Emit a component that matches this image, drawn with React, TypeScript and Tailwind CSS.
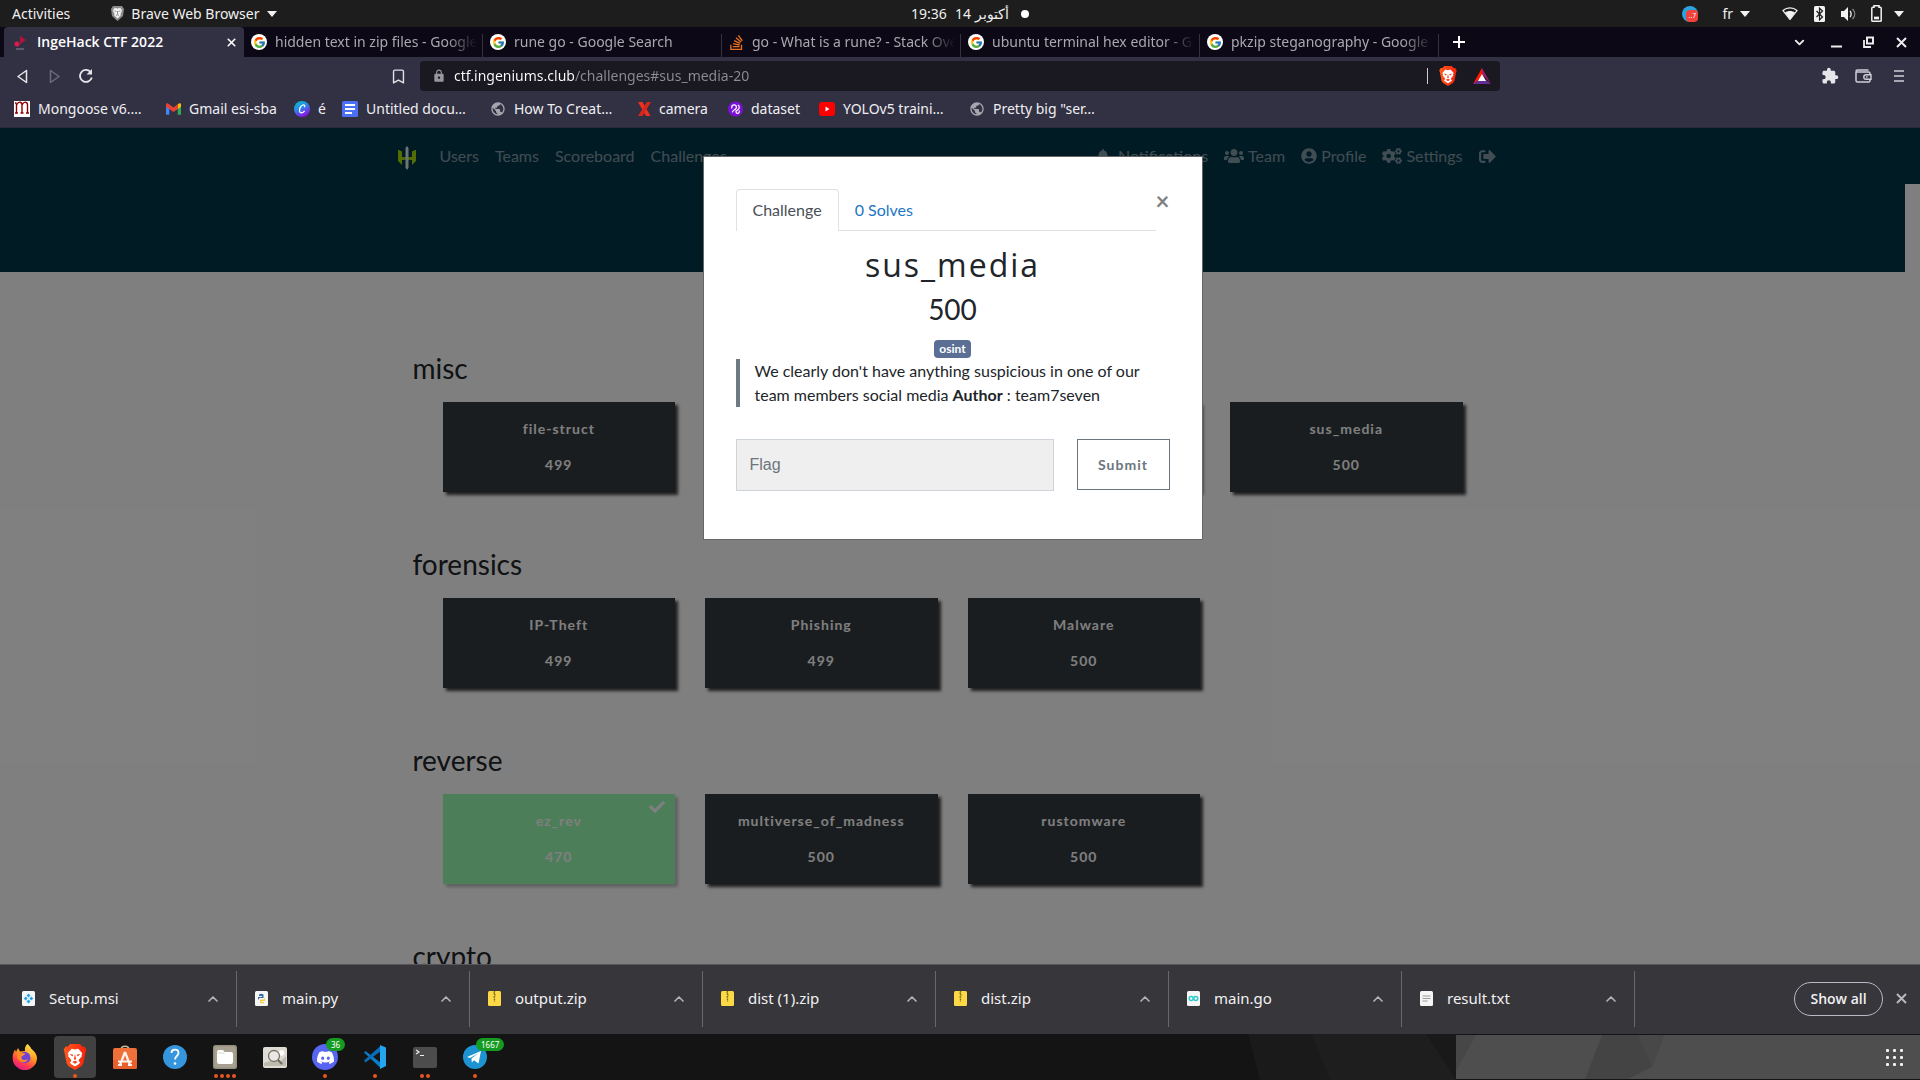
import type { ReactNode } from "react";
import { FaBell, FaCheck, FaCogs, FaSignOutAlt, FaUserCircle, FaUsers } from "react-icons/fa";
import { FcGoogle } from "react-icons/fc";
import { SiDiscord, SiStackoverflow } from "react-icons/si";
import { Bookmark, ChevronDown, ChevronUp, X } from "lucide-react";
import { MdExtension, MdLock, MdPublic } from "react-icons/md";

/* ---------- small drawings ---------- */

function Caret({ className = "" }: { className?: string }) {
  return (
    <svg width="10" height="6" viewBox="0 0 10 6" className={className} aria-hidden="true">
      <path d="M0 0h10L5 6z" fill="#f2f2f2" />
    </svg>
  );
}

function BraveMono() {
  return (
    <svg width="15" height="17" viewBox="0 0 15 17" aria-hidden="true">
      <path d="M3 1h9l2 3-1 7-5.500 5L2 11 1 4z" fill="#8c8c8c" />
      <path d="M4 3.500 6 3l1.500.7L9 3l2 .5 1 2.200-1.500 3 .3 1.600-3.300 3.200-3.300-3.200.3-1.600L3 5.700z" fill="#f4f4f4" />
      <path d="M4.500 5.800 6.500 6.500M10.500 5.800l-2 .7M7.500 6v3.500M6 10.500l1.500-.8 1.500.8" stroke="#777" strokeWidth=".8" fill="none" />
    </svg>
  );
}

function BraveLion({ size }: { size: number }) {
  return (
    <svg width={size} height={size} viewBox="0 0 24 24" aria-hidden="true">
      <defs>
        <linearGradient id="lion" x1="0" x2="1">
          <stop offset="0" stopColor="#ff5a1c" />
          <stop offset="1" stopColor="#f5200c" />
        </linearGradient>
      </defs>
      <path d="M7.500 0h9l2.300 2.500 2-.2 1.700 3-.8 2.500-2 10.200-1.800 2.500L12 24l-5.900-3.500L4.300 18l-2-10.200-.8-2.500 1.700-3 2 .2z" fill="url(#lion)" />
      <path
        d="M9 4.300 12 5l3-.7 3.800 4.200-.8 1.600.4 1.300-2.900 3.200.2 1.600 1.200.8-1.500 1.600L12 20.800l-3.400-2.200L7.100 17l1.200-.8.2-1.600-2.900-3.200.4-1.300-.8-1.600z"
        fill="#fff"
      />
      <path d="m7 9 3.400.9-.9 1.700zM17 9l-3.400.9.9 1.700zM12 9.500l1 4.300-1 .9-1-.9zM9.500 16.500 12 15.400l2.500 1.100L12 18.300z" fill="#fb3b14" />
    </svg>
  );
}

function BatTriangle() {
  return (
    <svg width="18" height="16" viewBox="0 0 18 16" aria-hidden="true">
      <path d="M9 0 0 16l9-6z" fill="#ff1a00" />
      <path d="M9 0v6l9 10z" fill="#9e1f63" />
      <path d="M0 16h18l-5-4H5z" fill="#662d91" />
      <path d="M9 0 5 12h2l2-4z" fill="#ff1a00" />
      <path d="m9 6 4 7H5z" fill="#fff" />
    </svg>
  );
}

function GoogleMark() {
  return (
    <span className="flex size-4 shrink-0 items-center justify-center rounded-full bg-white">
      <FcGoogle size={13} />
    </span>
  );
}

function CtfFavicon() {
  return (
    <svg width="16" height="16" viewBox="0 0 16 16" aria-hidden="true">
      <path d="m7 2 6 4-6 4z" fill="#b3123c" />
      <circle cx="4" cy="10" r="2.500" fill="#e0194c" />
      <path d="M3 15h8" stroke="#8a8792" strokeWidth="1" />
    </svg>
  );
}

function CtfLogo() {
  return (
    <svg width="18" height="24" viewBox="0 0 18 24" aria-hidden="true">
      <path d="M0 4h1l3 1.500V11h10V5.500L17 4h1v11l-4 4v-5H4v5l-4-4z" fill="#a8d808" />
      <path d="M6.500 3.500h5v17h-5z" fill="#03364a" />
      <path d="M6.500 11h5v3h-5z" fill="#a8d808" />
      <path d="M7.500 2 9 0l1.500 2v19.500L9 24l-1.500-2.500z" fill="#dfe8ea" />
    </svg>
  );
}

function Gmail() {
  return (
    <svg width="15" height="12" viewBox="0 0 16 12" aria-hidden="true">
      <path d="M0 1.500V12h3.500V4.500z" fill="#4285f4" />
      <path d="M16 1.500V12h-3.500V4.500z" fill="#34a853" />
      <path d="M12.500 1v5L16 3.500V1.500C16 0 14.500-.4 13.500.3z" fill="#fbbc04" />
      <path d="M0 1.500v2L8 9.300l4.500-3.300V1L8 4.300 2.500.3C1.500-.4 0 0 0 1.500z" fill="#ea4335" />
    </svg>
  );
}

function ApertureX() {
  return (
    <svg width="13" height="14" viewBox="0 0 13 14" aria-hidden="true">
      <path d="M0 0h4.500l8 14H8z" fill="#f0301f" />
      <path d="M9 0h4L4.500 14H0z" fill="#d8261c" />
    </svg>
  );
}

function YouTube() {
  return (
    <svg width="16" height="14" viewBox="0 0 16 14" aria-hidden="true">
      <rect width="16" height="14" rx="3" fill="#f00" />
      <path d="m6.500 4.500 4 2.500-4 2.500z" fill="#fff" />
    </svg>
  );
}

function DocsMark() {
  return (
    <svg width="16" height="16" viewBox="0 0 16 16" aria-hidden="true">
      <rect width="16" height="16" rx="1.500" fill="#4a70f5" />
      <path d="M3 4h10M3 8h10M3 12h7" stroke="#fff" strokeWidth="1.800" />
    </svg>
  );
}

function MongooseMark() {
  return (
    <svg width="16" height="16" viewBox="0 0 16 16" aria-hidden="true">
      <path d="M0 0h16v16H0z" fill="#fff" />
      <path d="M2.500 12V2.500M2.500 4C5-.5 8 1 8 4v8M8 4c2.500-4.500 5.500-3 5.500 0v8M1 12h3M6.500 12h3M12 12h3M1 2h1.500" stroke="#800" strokeWidth="1.400" fill="none" />
    </svg>
  );
}

function CanvaMark() {
  return (
    <svg width="16" height="16" viewBox="0 0 16 16" aria-hidden="true">
      <defs>
        <linearGradient id="canva" x1="0" y1="0" x2=".5" y2="1">
          <stop offset="0" stopColor="#00c4cc" />
          <stop offset=".5" stopColor="#2a8be6" />
          <stop offset="1" stopColor="#8a14ee" />
        </linearGradient>
      </defs>
      <circle cx="8" cy="8" r="8" fill="url(#canva)" />
      <path d="M10.300 6.200c1-1.200.2-2.700-1.300-2.200C6.500 4.800 5 8 5.600 10.300c.6 2.200 3.300 2 5-.4" stroke="#fff" strokeWidth="1.300" fill="none" />
    </svg>
  );
}

function RoboflowMark() {
  return (
    <svg width="15" height="16" viewBox="0 0 16 16" aria-hidden="true">
      <circle cx="8" cy="8" r="8" fill="#7b10d8" />
      <path d="M4 7.500V6a2.500 2.500 0 0 1 5 0q0 1.200-1 2l-2.500 2q-1 .8-.5 1.500" stroke="#fff" strokeWidth="1.300" fill="none" />
      <path d="M10.500 3.800q1.500.7 1.500 2.400 0 1.500-1.200 2.400L8.500 10.300v.7a1.700 1.700 0 0 0 3.500 0V9.500" stroke="#fff" strokeWidth="1.300" fill="none" />
    </svg>
  );
}

function Globe() {
  return <MdPublic size={16} className="text-[#a5a5ad]" />;
}

/* ---------- desktop top bar ---------- */

function TopBar() {
  return (
    <header className="grid h-[27px] shrink-0 grid-cols-3 items-center bg-[#1d1d1d] text-sm text-[#f0f0f0]">
      <div className="flex items-center pl-3">
        <button>Activities</button>
        <button className="ml-10 flex items-center">
          <BraveMono />
          <span className="ml-[6px]">Brave Web Browser</span>
          <Caret className="ml-[7px]" />
        </button>
      </div>
      <div className="flex items-center justify-center gap-3 pl-[20px]">
        <button className="flex gap-2 whitespace-nowrap">
          <span>19:36</span>
          <span className="flex gap-1">
            <span>14</span>
            <span lang="ar">أكتوبر</span>
          </span>
        </button>
        <span className="size-2 rounded-full bg-white" />
      </div>
      <div className="flex items-center justify-end pr-4">
        <span className="relative size-4 rounded-full bg-[#2ba3e0]">
          <span className="absolute top-1 left-1 flex h-3 w-3 items-center justify-center rounded-[4px] bg-[#f4403a] text-[7px] text-white">
            ..7
          </span>
        </span>
        <button className="ml-6 flex items-center gap-[7px]">
          fr <Caret />
        </button>
        <svg width="16" height="13" viewBox="0 0 16 13" className="ml-8" aria-hidden="true">
          <path d="M1 3.500C5 0 11 0 15 3.500L8 12.500z" fill="none" stroke="#f2f2f2" strokeWidth="1.200" />
          <path d="M3 5.500c3-2 7-2 10 0l-5 7z" fill="#f2f2f2" />
        </svg>
        <svg width="11" height="16" viewBox="0 0 11 16" className="ml-4" aria-hidden="true">
          <rect width="11" height="16" rx="1.500" fill="#f2f2f2" />
          <path d="m2.500 5 6 6-3 2.800V2.200L8.500 5l-6 6" fill="none" stroke="#1d1d1d" strokeWidth="1.200" />
        </svg>
        <svg width="16" height="14" viewBox="0 0 16 14" className="ml-4" aria-hidden="true">
          <path d="M0 4h3l4-4v14l-4-4H0z" fill="#f2f2f2" />
          <path d="M9 4c1.500 1.500 1.500 4.500 0 6" stroke="#f2f2f2" strokeWidth="1.300" fill="none" />
          <path d="M11.500 2c3 3 3 7 0 10" stroke="#888" strokeWidth="1.300" fill="none" />
        </svg>
        <svg width="11" height="17" viewBox="0 0 11 19" preserveAspectRatio="none" className="ml-[14px]" aria-hidden="true">
          <path d="M3 2.500V.8h5v1.700h1.200q1 0 1 1v13.700q0 1-1 1H1.800q-1 0-1-1V3.500q0-1 1-1z" fill="none" stroke="#f2f2f2" strokeWidth="1.500" />
          <path d="M3 13h5v3H3z" fill="#f2f2f2" />
        </svg>
        <Caret className="ml-3" />
      </div>
    </header>
  );
}

/* ---------- browser chrome ---------- */

const tabs: { title: string; icon: ReactNode }[] = [
  { title: "hidden text in zip files - Google Search", icon: <GoogleMark /> },
  { title: "rune go - Google Search", icon: <GoogleMark /> },
  { title: "go - What is a rune? - Stack Overflow", icon: <SiStackoverflow size={15} className="shrink-0 text-[#e8701f]" /> },
  { title: "ubuntu terminal hex editor - Google Search", icon: <GoogleMark /> },
  { title: "pkzip steganography - Google Search", icon: <GoogleMark /> },
];

function TabStrip() {
  return (
    <div className="flex h-[30px] shrink-0 bg-[#0c0816] pl-1 text-sm text-[#a9a8ae]">
      <div className="flex w-[240px] shrink-0 items-center rounded-t bg-[#323144] pr-[6px] pl-[9px] text-white">
        <CtfFavicon />
        <button className="ml-2 flex-1 truncate text-left font-['Open_Sans',sans-serif] font-semibold">IngeHack CTF 2022</button>
        <button aria-label="Close tab">
          <X size={13} strokeWidth={3} />
        </button>
      </div>
      {tabs.map((tab) => (
        <div key={tab.title} className="flex w-[239px] shrink-0 items-end">
          <button className="flex h-[30px] min-w-0 flex-1 items-center gap-2 pr-[5px] pl-[7px]">
            {tab.icon}
            <span className="min-w-0 flex-1 overflow-hidden mask-r-from-85% mask-r-to-100% text-left whitespace-nowrap">{tab.title}</span>
          </button>
          <span className="h-[23px] w-px bg-[#35323d]" />
        </div>
      ))}
      <button aria-label="New tab" className="ml-[14px] flex items-center">
        <svg width="12" height="12" viewBox="0 0 12 12" aria-hidden="true">
          <path d="M6 0v12M0 6h12" stroke="#fff" strokeWidth="2" />
        </svg>
      </button>
      <div className="ml-auto flex items-center pr-[13px] text-[#ececec]">
        <button aria-label="Search tabs">
          <ChevronDown size={15} strokeWidth={3} />
        </button>
        <button aria-label="Minimize" className="ml-6">
          <svg width="11" height="12" viewBox="0 0 11 12" aria-hidden="true">
            <path d="M0 10.500h11" stroke="#ececec" strokeWidth="2" />
          </svg>
        </button>
        <button aria-label="Restore" className="ml-[21px]">
          <svg width="11" height="12" viewBox="0 0 11 12" aria-hidden="true">
            <path d="M4 1.500h6v6H4z" fill="none" stroke="#ececec" strokeWidth="2" />
            <path d="M1 4v7h7" fill="none" stroke="#ececec" strokeWidth="1.800" />
          </svg>
        </button>
        <button aria-label="Close window" className="ml-[22px]">
          <svg width="11" height="11" viewBox="0 0 11 11" aria-hidden="true">
            <path d="m1 1 9 9M10 1l-9 9" stroke="#ececec" strokeWidth="2" />
          </svg>
        </button>
      </div>
    </div>
  );
}

function Toolbar() {
  return (
    <div className="flex h-[38px] shrink-0 items-center bg-[#323144] pr-4 pl-[17px]">
      <button aria-label="Back">
        <svg width="11" height="15" viewBox="0 0 11 15" aria-hidden="true">
          <path d="M9.500 1.500v12L1 7.500z" fill="none" stroke="#e6e6ea" strokeWidth="1.500" strokeLinejoin="round" />
        </svg>
      </button>
      <button aria-label="Forward" className="ml-[21px]">
        <svg width="11" height="15" viewBox="0 0 11 15" aria-hidden="true">
          <path d="M1.500 1.500v12l8.500-6z" fill="none" stroke="#6c6b7a" strokeWidth="1.500" strokeLinejoin="round" />
        </svg>
      </button>
      <button aria-label="Reload" className="ml-[18px]">
        <svg width="16" height="16" viewBox="0 0 16 16" aria-hidden="true">
          <path d="M13.800 9.500a6 6 0 1 1-1.500-5.800" fill="none" stroke="#e6e6ea" strokeWidth="1.800" />
          <path d="M14 1v5.500H8.500z" fill="#e6e6ea" />
        </svg>
      </button>
      <button aria-label="Bookmark this page" className="ml-[296px] text-[#e0e0e6]">
        <Bookmark size={17} />
      </button>
      <div className="ml-[13px] flex h-[30px] w-full max-w-[1080px] items-center rounded bg-[#1a1922] pr-[9px] pl-3 text-sm">
        <MdLock size={14} className="text-[#96969c]" />
        <label htmlFor="address" className="sr-only">
          Address
        </label>
        <input
          id="address"
          defaultValue="ctf.ingeniums.club/challenges#sus_media-20"
          className="ml-2 flex-1 bg-linear-to-r from-white from-[121px] to-[#8d8c95] to-[121px] bg-clip-text text-transparent outline-none"
        />
        <span className="h-4 w-px bg-[#c9c9ce]" />
        <button aria-label="Brave Shields" className="ml-[10px]">
          <BraveLion size={20} />
        </button>
        <button aria-label="Brave Rewards" className="ml-[15px]">
          <BatTriangle />
        </button>
      </div>
      <div className="ml-auto flex items-center text-[#e6e6ea]">
        <button aria-label="Extensions">
          <MdExtension size={18} />
        </button>
        <button aria-label="Wallet" className="ml-4">
          <svg width="17" height="14" viewBox="0 0 17 14" aria-hidden="true">
            <path d="M1 3v8.500Q1 13 2.500 13h11q1.500 0 1.500-1.500v-7Q15 3 13.500 3H2.500Q1 3 1 2t1.500-1h11" fill="none" stroke="#cfcfd6" strokeWidth="1.500" />
            <path d="M16 5.800h-5a2.200 2.200 0 0 0 0 4.400h5z" fill="#323144" stroke="#cfcfd6" strokeWidth="1.400" />
            <path d="M11 8h1.500" stroke="#cfcfd6" strokeWidth="1.500" />
          </svg>
        </button>
        <button aria-label="Menu" className="ml-[22px]">
          <svg width="10" height="12" viewBox="0 0 10 12" aria-hidden="true">
            <path d="M0 1h10M0 6h10M0 11h10" stroke="#cfcfd6" strokeWidth="1.600" />
          </svg>
        </button>
      </div>
    </div>
  );
}

const bookmarks: { label: string; icon: ReactNode; width: string }[] = [
  { label: "Mongoose v6.…", icon: <MongooseMark />, width: "w-[152px]" },
  { label: "Gmail esi-sba", icon: <Gmail />, width: "w-32" },
  { label: "é", icon: <CanvaMark />, width: "w-12" },
  { label: "Untitled docu…", icon: <DocsMark />, width: "w-[148px]" },
  { label: "How To Creat…", icon: <Globe />, width: "w-[148px]" },
  { label: "camera", icon: <ApertureX />, width: "w-[90px]" },
  { label: "dataset", icon: <RoboflowMark />, width: "w-[91px]" },
  { label: "YOLOv5 traini…", icon: <YouTube />, width: "w-[150px]" },
  { label: 'Pretty big "ser…', icon: <Globe />, width: "w-[150px]" },
];

function BookmarksBar() {
  return (
    <nav aria-label="Bookmarks" className="flex h-[33px] shrink-0 items-center border-b border-[#2a2938] bg-[#323144] pb-1 pl-[14px] text-sm text-[#efeff2]">
      {bookmarks.map((b) => (
        <a key={b.label} href="#bookmark" className={`flex shrink-0 items-center gap-2 whitespace-nowrap ${b.width}`}>
          {b.icon}
          {b.label}
        </a>
      ))}
    </nav>
  );
}

/* ---------- the CTF site ---------- */

function SiteNav() {
  return (
    <nav className="h-14 bg-[#03364a] pr-[15px] text-base text-white/50">
      <div className="mx-auto flex h-full max-w-[1140px] items-center px-[15px]">
        <a href="#home" aria-label="IngeHack" className="mr-4 pt-1">
          <CtfLogo />
        </a>
        <div className="flex gap-4 px-2">
          <a href="#users">Users</a>
          <a href="#teams">Teams</a>
          <a href="#scoreboard">Scoreboard</a>
          <a href="#challenges">Challenges</a>
        </div>
        <div className="ml-auto flex gap-4 px-3">
          <a href="#notifications" className="flex items-center gap-2">
            <FaBell size={14} /> Notifications
          </a>
          <a href="#team" className="flex items-center gap-1">
            <FaUsers size={20} /> Team
          </a>
          <a href="#profile" className="flex items-center gap-1">
            <FaUserCircle size={16} /> Profile
          </a>
          <a href="#settings" className="flex items-center gap-1">
            <FaCogs size={20} /> Settings
          </a>
          <a href="#logout" aria-label="Logout" className="flex items-center">
            <FaSignOutAlt size={17} />
          </a>
        </div>
      </div>
    </nav>
  );
}

type Challenge = { name: string; points: number; solved?: boolean };

const categories: { name: string; challenges: Challenge[] }[] = [
  {
    name: "misc",
    challenges: [
      { name: "file-struct", points: 499 },
      { name: "", points: 0 },
      { name: "", points: 0 },
      { name: "sus_media", points: 500 },
    ],
  },
  {
    name: "forensics",
    challenges: [
      { name: "IP-Theft", points: 499 },
      { name: "Phishing", points: 499 },
      { name: "Malware", points: 500 },
    ],
  },
  {
    name: "reverse",
    challenges: [
      { name: "ez_rev", points: 470, solved: true },
      { name: "multiverse_of_madness", points: 500 },
      { name: "rustomware", points: 500 },
    ],
  },
  { name: "crypto", challenges: [] },
];

function ChallengeCard({ name, points, solved }: Challenge) {
  return (
    <button
      className={`relative flex h-[90px] flex-col items-center justify-center gap-4 text-sm font-bold tracking-[1px] text-white ${
        solved ? "bg-[#9afcb4] shadow-[3px_3px_3px_rgba(0,0,0,0.25)]" : "bg-[#343a40] shadow-[3px_3px_3px_rgba(0,0,0,0.75)]"
      }`}
    >
      {solved && <FaCheck size={16} className="absolute top-[5px] right-[10px]" />}
      <span>{name}</span>
      <span>{points || ""}</span>
    </button>
  );
}

function Challenges() {
  return (
    <main className="mx-auto max-w-[1140px] px-[30px] pt-[79px]">
      {categories.map((c) => (
        <section key={c.name} className="mb-[55px]">
          <h3 className="text-[28px] leading-[34px] text-[#212529]">{c.name}</h3>
          <div className="mt-[17px] grid grid-cols-4 gap-[30px] px-[30px]">
            {c.challenges.map((ch, i) => (
              <ChallengeCard key={i} {...ch} />
            ))}
          </div>
        </section>
      ))}
    </main>
  );
}

function ChallengeModal() {
  return (
    <div role="dialog" aria-labelledby="challenge-title" className="w-[500px] border border-[#666] bg-white bg-clip-padding p-8 text-base text-[#212529]">
      <div className="flex items-start">
        <div className="flex flex-1 border-b border-[#dee2e6]">
          <button className="-mb-px rounded-t border border-b-0 border-[#dee2e6] bg-white px-4 py-2 pb-[9px] text-[#495057]">Challenge</button>
          <button className="px-4 pt-[9px] pb-2 text-[#2276c4]">0 Solves</button>
        </div>
        <button aria-label="Close" className="h-6 w-[14px] text-2xl leading-6 font-bold text-[#7f7f7f]">
          ×
        </button>
      </div>
      <div className="flex flex-col items-center pt-[15px]">
        <h2 id="challenge-title" className="font-['Open_Sans',sans-serif] text-[32px] leading-[38px] tracking-[2px]">
          sus_media
        </h2>
        <h3 className="mt-2 text-[28px] leading-[34px]">500</h3>
        <span className="mt-[14px] mb-px flex h-[18px] items-center rounded bg-[#5b6f95] px-[5px] text-xs font-bold text-white">osint</span>
      </div>
      <blockquote className="border-l-4 border-[#6c7a84] pl-[15px] leading-6">
        We clearly don't have anything suspicious in one of our team members social media <strong>Author</strong> : team7seven
      </blockquote>
      <form className="mt-8 mb-4 flex items-start gap-[23px]" onSubmit={(e) => e.preventDefault()}>
        <label htmlFor="flag" className="sr-only">
          Flag
        </label>
        <input
          id="flag"
          placeholder="Flag"
          className="h-[52px] min-w-0 flex-1 border border-[#ced4da] bg-[#efefef] px-[13px] font-['Liberation_Sans',sans-serif] text-base outline-none placeholder:text-[#6c757d]"
        />
        <button className="h-[51px] w-[93px] border border-[#6c757d] text-sm font-bold tracking-[1px] text-[#6c757d]">Submit</button>
      </form>
    </div>
  );
}

function Site() {
  return (
    <div className="relative min-h-0 flex-1 overflow-hidden bg-white font-[Lato,sans-serif]">
      <SiteNav />
      <div className="mr-[15px]">
        <div className="h-[88px] bg-[#03364a]" />
        <Challenges />
      </div>
      <div className="absolute inset-0 flex items-start justify-center bg-black/50 pt-7 pr-[15px]">
        <ChallengeModal />
      </div>
    </div>
  );
}

/* ---------- download shelf ---------- */

function FileIcon({ kind }: { kind: string }) {
  const zip = kind === "zip";
  return (
    <svg width="13" height="15" viewBox="0 0 13 15" aria-hidden="true">
      <rect width="13" height="15" rx="1.500" fill={zip ? "#fdda45" : "#f6f6f6"} />
      {zip && <path d="M6.500 0v8M5.500 2h1M6.500 4h1M5.500 6h1M6.500 8v3" stroke="#7a6a1c" strokeWidth="1.300" strokeDasharray="1.500 1" />}
      {kind === "msi" && <path d="m6.500 2.500 2 2-2 2-2-2zM6.500 8.500l2 2-2 2-2-2zM3.700 5.500l2 2-2 2-2-2zM9.300 5.500l2 2-2 2-2-2z" fill="#27a5e8" />}
      {kind === "py" && (
        <>
          <path d="M3 9V6h4V5H4V3.500q2-1.500 4.500 0V7H4.500z" fill="#2e6da4" />
          <path d="M10 6v4H6.500v1H9v1q-2 1-4-.5V8.500h4z" fill="#f7cf3c" />
        </>
      )}
      {kind === "go" && (
        <>
          <circle cx="4.200" cy="7.500" r="2" fill="none" stroke="#27c9c9" strokeWidth="1.400" />
          <circle cx="8.800" cy="7.500" r="2" fill="none" stroke="#27c9c9" strokeWidth="1.400" />
        </>
      )}
      {kind === "txt" && <path d="M2.500 5h8M2.500 7.500h8M2.500 10h5" stroke="#9a9a9a" />}
    </svg>
  );
}

const downloads = ["Setup.msi", "main.py", "output.zip", "dist (1).zip", "dist.zip", "main.go", "result.txt"];

function DownloadShelf() {
  return (
    <div className="flex h-[70px] shrink-0 items-center border-t border-[#55545a] bg-[#37363b] pb-[2px] pl-1 text-[15px] text-[#f1f1f3]">
      {downloads.map((name) => (
        <div key={name} className="flex h-14 w-[233px] shrink-0 items-center border-r border-[#68676c] pr-[15px] pl-[18px]">
          <FileIcon kind={name.split(".").pop() ?? ""} />
          <button className="ml-[14px] flex-1 text-left">{name}</button>
          <button aria-label={`Options for ${name}`} className="text-[#b3b2b7]">
            <ChevronUp size={16} strokeWidth={2.500} />
          </button>
        </div>
      ))}
      <button className="ml-auto h-[34px] w-[89px] rounded-full border border-[#b9b9c4] font-['Open_Sans',sans-serif] text-sm font-semibold">Show all</button>
      <button aria-label="Close downloads" className="mr-[13px] ml-[13px]">
        <svg width="11" height="11" viewBox="0 0 11 11" aria-hidden="true">
          <path d="m1 1 9 9M10 1l-9 9" stroke="#b9b9bd" strokeWidth="2" />
        </svg>
      </button>
    </div>
  );
}

/* ---------- dock ---------- */

function Firefox() {
  return (
    <svg width="26" height="26" viewBox="0 0 26 26" aria-hidden="true">
      <defs>
        <linearGradient id="fox" x1=".8" y1="0" x2=".3" y2="1">
          <stop offset="0" stopColor="#fff04a" />
          <stop offset=".45" stopColor="#ff9420" />
          <stop offset=".75" stopColor="#ff3b50" />
          <stop offset="1" stopColor="#e01a8c" />
        </linearGradient>
      </defs>
      <path d="M15.500 0c1.500 1 3 3 4 5 1.500.8 5.500 5 5.500 9a12.200 12.200 0 0 1-24.400 0C.600 10.500 1.500 8 3 5.500L4 8l2-4 2 3.500 5-.5c-.5-2.500.5-5.500 2.500-7z" fill="url(#fox)" />
      <circle cx="12.800" cy="13.500" r="5.800" fill="#6f42d8" />
      <path d="M5 8.500c3-1.500 5 .5 8.500 1-.5 1.800-3 2-4 3.300-.8 2.400 1.500 3.700 4 3 1.500-.4 2.500-.4 2.500-.4-3 4.600-10 3.600-11-3.400z" fill="#ff8a25" />
      <path d="M13.500 8c3 0 5.500 2.500 5 6 2-2 1-6-1-8z" fill="#ffbe34" />
    </svg>
  );
}

function SoftwareStore() {
  return (
    <svg width="24" height="25" viewBox="0 0 24 25" aria-hidden="true">
      <path d="M8 5c0-5 8-5 8 0" fill="none" stroke="#c9b99c" strokeWidth="1.600" />
      <rect y="3" width="24" height="21" rx="2" fill="#f0703a" />
      <path d="M0 15h24v7q0 2-2 2H2q-2 0-2-2z" fill="#e8602c" />
      <path d="M12 7 7 20M12 7l5 13M5 16.500h14M5 20h4M15 20h4" stroke="#fff4ee" strokeWidth="2.200" fill="none" />
    </svg>
  );
}

function Help() {
  return (
    <svg width="24" height="24" viewBox="0 0 24 24" aria-hidden="true">
      <circle cx="12" cy="12" r="12" fill="#3596dd" />
      <path d="M8.500 8c0-4.500 7-4.500 7 0 0 3-3.500 3-3.500 6.500" fill="none" stroke="#fff" strokeWidth="1.800" />
      <circle cx="12" cy="18.500" r="1.300" fill="#fff" />
    </svg>
  );
}

function Files() {
  return (
    <svg width="24" height="24" viewBox="0 0 24 24" aria-hidden="true">
      <rect width="24" height="24" rx="2.500" fill="#968e7e" />
      <rect x="1.500" y="1.500" width="21" height="21" rx="1.500" fill="#a8a090" />
      <path d="M4 7q0-2 2-2h4l1.500 2H18q2 0 2 2v8q0 2-2 2H6q-2 0-2-2z" fill="#fff" />
      <path d="M4.500 8h7" stroke="#d9d5cc" />
    </svg>
  );
}

function ImageViewer() {
  return (
    <svg width="24" height="21" viewBox="0 0 24 21" aria-hidden="true">
      <rect width="24" height="21" rx="2" fill="#dfddd3" />
      <path d="M1 19h22V9l-5 5-5-2-12 4z" fill="#bdbaae" />
      <circle cx="18.500" cy="6" r="2.700" fill="#fff" />
      <circle cx="11" cy="9" r="5.500" fill="#e9e8e4" stroke="#77756d" strokeWidth="1.300" />
      <path d="m15 13 4 4" stroke="#6b6961" strokeWidth="2" />
    </svg>
  );
}

function DiscordMark() {
  return (
    <span className="flex size-[26px] items-center justify-center rounded-full bg-[#5865f2] text-white">
      <SiDiscord size={17} />
    </span>
  );
}

function VsCode() {
  return (
    <svg width="24" height="24" viewBox="0 0 24 24" aria-hidden="true">
      <path d="M1 7.500 2.500 6 18 18v5.500z" fill="#0a7cc8" />
      <path d="M1 15.500 18 .5V6L2.500 17.500z" fill="#0a6cb5" />
      <path d="m17 0 6 2.500v18.500L17 24z" fill="#23a5f1" />
    </svg>
  );
}

function TerminalMark() {
  return (
    <svg width="24" height="21" viewBox="0 0 24 21" aria-hidden="true">
      <rect width="24" height="21" rx="2" fill="#4c4c4c" />
      <path d="m3 3 3 2-3 2M7 8.500h4" fill="none" stroke="#eee" strokeWidth="1.200" />
    </svg>
  );
}

function TelegramMark() {
  return (
    <svg width="24" height="24" viewBox="0 0 24 24" aria-hidden="true">
      <circle cx="12" cy="12" r="12" fill="#1d93d2" />
      <path d="m4 12 14-6-2.500 12.500-4.500-3.300-2.200 2.300-.3-4 6.500-5-8 4.500z" fill="#fff" />
    </svg>
  );
}

const dock: { name: string; icon: ReactNode; windows: number; active?: boolean; badge?: string }[] = [
  { name: "Firefox", icon: <Firefox />, windows: 0 },
  { name: "Brave", icon: <BraveLion size={26} />, windows: 1, active: true },
  { name: "Software", icon: <SoftwareStore />, windows: 0 },
  { name: "Help", icon: <Help />, windows: 0 },
  { name: "Files", icon: <Files />, windows: 4 },
  { name: "Image viewer", icon: <ImageViewer />, windows: 0 },
  { name: "Discord", icon: <DiscordMark />, windows: 1, badge: "36" },
  { name: "Code", icon: <VsCode />, windows: 1 },
  { name: "Terminal", icon: <TerminalMark />, windows: 2 },
  { name: "Telegram", icon: <TelegramMark />, windows: 1, badge: "1667" },
];

function Dock() {
  return (
    <footer className="relative flex h-[46px] shrink-0 items-center bg-[#141414]">
      <svg className="absolute inset-y-0 right-0 h-full w-[680px]" viewBox="0 0 680 46" preserveAspectRatio="none" aria-hidden="true">
        <path d="M8 0h208v46H20z" fill="#1a1a1a" />
        <path d="M72 0h144v46H90z" fill="#1e1e1e" />
        <path d="M186 0h30v46z" fill="#191919" />
        <path d="M216 1h464v44H216z" fill="#4e4e4e" />
        <path d="M216 1h20l-20 36z" fill="#474747" />
        <path d="M362 1h62l-12 32-24 12h-43z" fill="#444" />
        <path d="M398 1h26l-12 32z" fill="#484848" />
      </svg>
      {dock.map((app) => (
        <div key={app.name} className="flex w-[50px] justify-center">
          <button aria-label={app.name} className={`relative flex h-[42px] w-[42px] items-center justify-center rounded ${app.active ? "bg-[#414141]" : ""}`}>
            {app.icon}
            {app.badge && (
              <span className="absolute top-[2px] left-[22px] flex h-[13px] items-center rounded-full bg-[#159a22] px-[5px] text-[8px] text-white">{app.badge}</span>
            )}
            <span className="absolute inset-x-0 bottom-0 flex justify-center gap-[2px]">
              {Array.from({ length: app.windows }, (_, i) => (
                <span key={i} className="size-1 rounded-full bg-[#e95420]" />
              ))}
            </span>
          </button>
        </div>
      ))}
      <button aria-label="Show applications" className="relative mr-[17px] ml-auto grid grid-cols-3 gap-1">
        {Array.from({ length: 9 }, (_, i) => (
          <span key={i} className="size-[3px] rounded-[1px] bg-[#f2f2f2]" />
        ))}
      </button>
    </footer>
  );
}

export default function App() {
  return (
    <div className="flex h-screen flex-col overflow-hidden font-['Noto_Sans',sans-serif]">
      <TopBar />
      <TabStrip />
      <Toolbar />
      <BookmarksBar />
      <Site />
      <DownloadShelf />
      <Dock />
    </div>
  );
}
